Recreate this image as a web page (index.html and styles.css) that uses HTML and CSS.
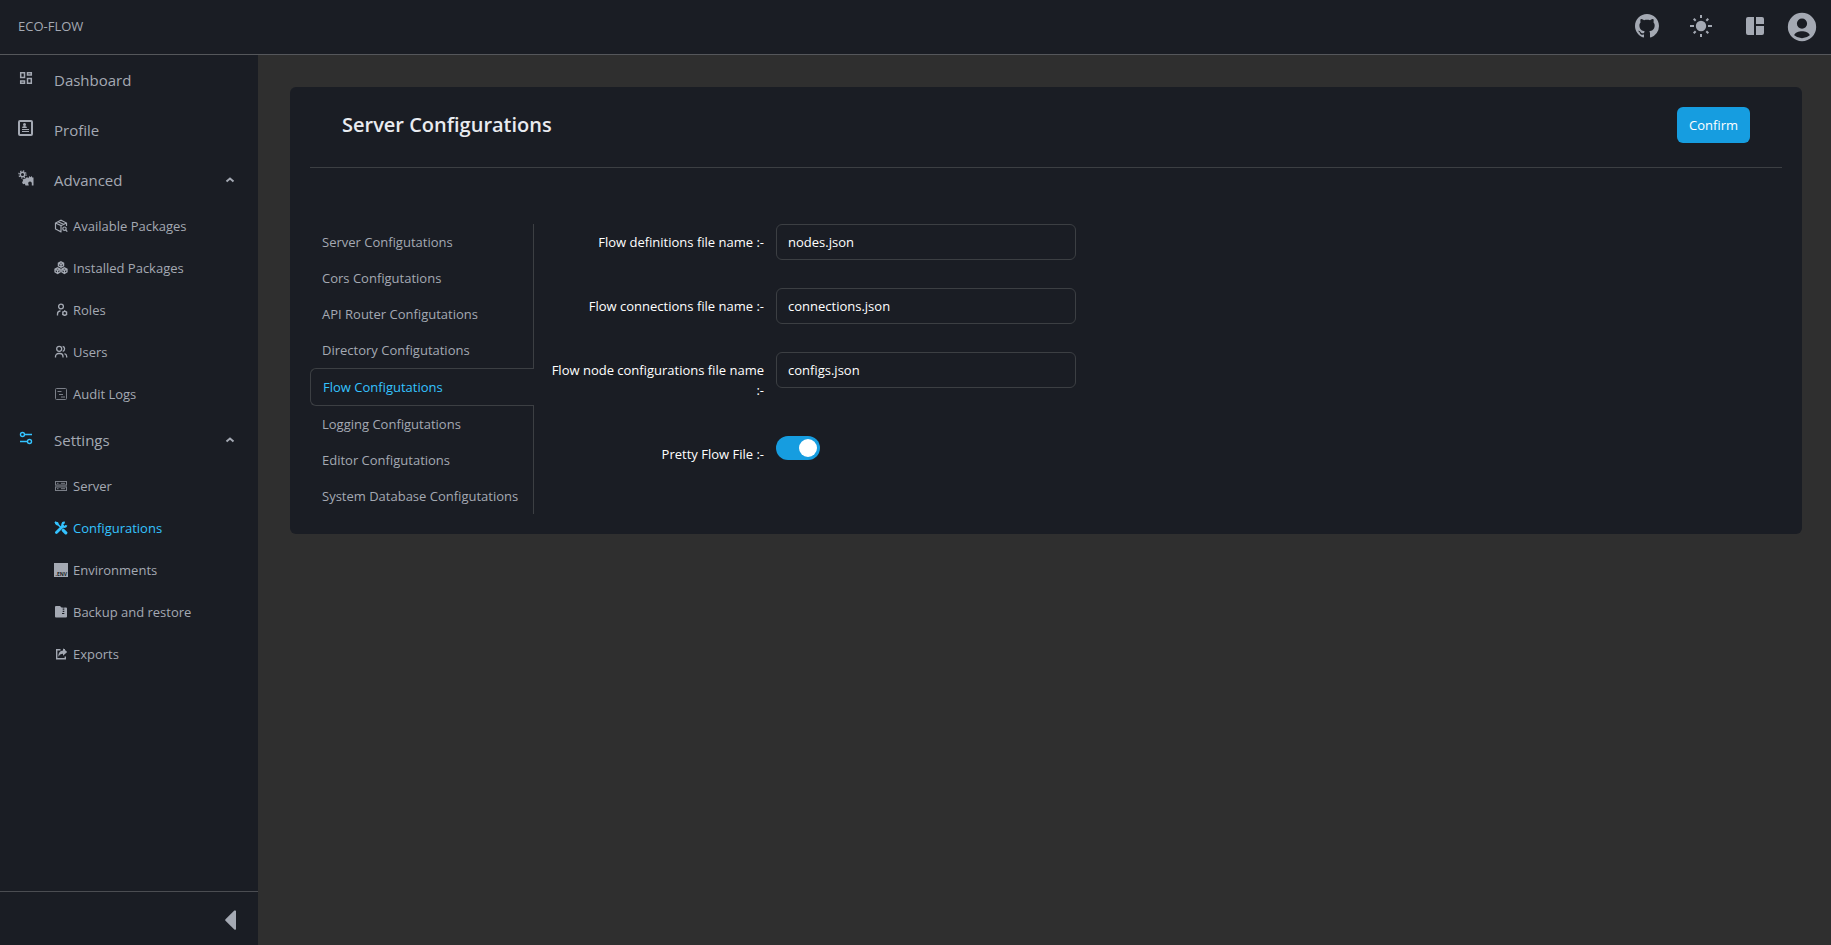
FILE: index.html
```html
<!DOCTYPE html>
<html lang="en">
<head>
<meta charset="utf-8">
<title>ECO-FLOW</title>
<link rel="stylesheet" href="styles.css">
</head>
<body>
<header class="topbar">
  <a class="brand" href="#">ECO-FLOW</a>
  <div class="tools">
    <a class="tool" href="#" aria-label="GitHub"><svg width="24" height="24" viewBox="0 0 16 16" fill="currentColor"><path d="M8 0C3.58 0 0 3.58 0 8c0 3.54 2.29 6.53 5.47 7.59.4.07.55-.17.55-.38 0-.19-.01-.82-.01-1.49-2.01.37-2.53-.49-2.69-.94-.09-.23-.48-.94-.82-1.13-.28-.15-.68-.52-.01-.53.63-.01 1.08.58 1.23.82.72 1.21 1.87.87 2.33.66.07-.52.28-.87.51-1.07-1.78-.2-3.64-.89-3.64-3.95 0-.87.31-1.59.82-2.15-.08-.2-.36-1.02.08-2.12 0 0 .67-.21 2.2.82.64-.18 1.32-.27 2-.27s1.36.09 2 .27c1.53-1.04 2.2-.82 2.2-.82.44 1.1.16 1.92.08 2.12.51.56.82 1.27.82 2.15 0 3.07-1.87 3.75-3.65 3.95.29.25.54.73.54 1.48 0 1.07-.01 1.93-.01 2.2 0 .21.15.46.55.38A8.01 8.01 0 0 0 16 8c0-4.42-3.58-8-8-8z"/></svg></a>
    <button class="tool" aria-label="Light theme"><svg width="24" height="24" viewBox="0 0 24 24" fill="currentColor" stroke="currentColor" stroke-width="2"><circle cx="12" cy="12" r="5.200" stroke="none"/><path d="M12 1v3M12 20v3M1 12h4M19 12h4M4.700 4.700l2 2M17.300 17.300l2 2M4.700 19.300l2-2M17.300 6.700l2-2"/></svg></button>
    <button class="tool" aria-label="Layout"><svg width="24" height="24" viewBox="0 0 24 24" fill="currentColor"><path d="M11 21H5a2 2 0 0 1-2-2V5a2 2 0 0 1 2-2h6zM13 21h6a2 2 0 0 0 2-2v-7h-8zM21 10V5a2 2 0 0 0-2-2h-6v7z"/></svg></button>
    <button class="tool account" aria-label="Account"><svg width="34" height="34" viewBox="0 0 24 24" fill="currentColor"><path d="M12 2a10 10 0 1 0 0 20 10 10 0 0 0 0-20zm0 4a3.600 3.600 0 1 1 0 7.200A3.600 3.600 0 0 1 12 6zm0 14a9 9 0 0 1-5.500-2.200c.5-1.800 3.200-2.800 5.500-2.800s5 1 5.500 2.800A9 9 0 0 1 12 20z"/></svg></button>
  </div>
</header>
<div class="body">
  <aside class="sidebar">
    <nav class="nav">
      <a class="item" href="#"><svg class="icon" viewBox="0 0 16 16" fill="none" stroke="currentColor" stroke-width="1.500"><path d="M2.700 2.700h3.800v4.800H2.700zM9.500 2.700h3.800v2.300H9.500zM2.700 11h3.800v2.300H2.700zM9.500 8.500h3.800v4.800H9.500z"/></svg>Dashboard</a>
      <a class="item" href="#"><svg class="icon" viewBox="0 0 16 16" fill="none" stroke="currentColor"><rect x="1" y="1" width="13" height="14" rx="1" stroke-width="2"/><path d="M4 9.500h7M4 11.500h7" stroke-width="1"/><circle cx="6.500" cy="4.500" r="1.500" fill="currentColor" stroke="none"/><path d="M4 8q0-2 2.500-2t2.500 2z" fill="currentColor" stroke="none"/></svg>Profile</a>
      <button class="item"><svg class="icon" viewBox="0 0 16 16" fill="currentColor"><circle cx="4.500" cy="4.500" r="2.200" fill="none" stroke="currentColor" stroke-width="1.400"/><circle cx="4.500" cy="4.500" r="3.600" fill="none" stroke="currentColor" stroke-width="1.200" stroke-dasharray="1.400 1.427"/><path d="M7.500 8.500L9 7l1.300 1.200L11.500 6l1 1.300 1.200-1.300.6 1.500H15.500V15.500H13.800v-2.300a1.800 1.800 0 0 0-3.600 0l.6 2.300H7.500l-.7-1.700-1.800.4L4 12l1.200-.9L4.500 9.500 6 9z"/></svg><span class="grow">Advanced</span><svg class="caret" width="10" height="8" viewBox="0 0 10 8" fill="none" stroke="currentColor" stroke-width="2"><path d="M1.500 5.500L5 2.500l3.500 3"/></svg></button>
      <a class="sub" href="#"><svg class="mini" viewBox="0 0 14 14" fill="none" stroke="currentColor" stroke-width="1.200"><path d="M7.500 12.800H7L1.500 10V4L7 1.200 12.500 4v3M1.500 4L7 6.500 12.500 4M7 6.500v6.300M4 2.700l5.500 2.600"/><circle cx="10.500" cy="9.700" r="1.700"/><path d="M11.700 11l1.600 1.600"/></svg>Available Packages</a>
      <a class="sub" href="#"><svg class="mini" viewBox="0 0 14 14" fill="none" stroke="currentColor"><path d="M7 .8l2.600 1.300v2.800L7 6.300 4.400 4.900V2.100zM4.400 2.100L7 3.400l2.600-1.300M7 3.400v2.900M3.600 6.800l2.600 1.300v2.800L3.600 12.500 1 10.900V8.100zM1 8.100l2.600 1.300 2.600-1.300M3.600 9.400v3M10.400 6.800L13 8.100v2.800l-2.600 1.600-2.600-1.600V8.100zM7.800 8.100l2.600 1.300L13 8.100M10.400 9.400v3" stroke-width="1.300"/></svg>Installed Packages</a>
      <a class="sub" href="#"><svg class="mini" viewBox="0 0 14 14" fill="none" stroke="currentColor" stroke-width="1.300"><circle cx="7" cy="3.500" r="2.400"/><path d="M3.500 12.500v-1.500A3 3 0 0 1 6.500 8"/><circle cx="10.700" cy="10.200" r="1.900"/><path d="M10.700 7.300v1M10.700 12v1M8.200 8.800l.9.500M12.300 11.100l.9.500M8.200 11.600l.9-.5M12.300 9.300l.9-.5"/></svg>Roles</a>
      <a class="sub" href="#"><svg class="mini" viewBox="0 0 14 14" fill="none" stroke="currentColor" stroke-width="1.300"><circle cx="5.200" cy="3.800" r="2.500"/><path d="M1.500 12.500V11.500A3 3 0 0 1 4.500 8.500h1.500a3 3 0 0 1 3 3v1M8.700 1.300a2.600 2.600 0 0 1 0 5M10.500 8.700a3 3 0 0 1 2.200 2.800v1"/></svg>Users</a>
      <a class="sub" href="#"><svg class="mini dim" viewBox="0 0 14 14" fill="none" stroke="currentColor"><rect x="1.500" y="1.500" width="11" height="11" rx="1"/><path d="M3.500 4.500h4M5 7.500h4M7 10h4"/></svg>Audit Logs</a>
      <button class="item"><svg class="icon accent" viewBox="0 0 16 16" fill="none" stroke="currentColor" stroke-width="1.400"><circle cx="4.500" cy="4.500" r="2"/><path d="M6.500 4.500H14M2 11.500h7.500"/><circle cx="11.500" cy="11.500" r="2"/></svg><span class="grow">Settings</span><svg class="caret" width="10" height="8" viewBox="0 0 10 8" fill="none" stroke="currentColor" stroke-width="2"><path d="M1.500 5.500L5 2.500l3.500 3"/></svg></button>
      <a class="sub" href="#"><svg class="mini dim" viewBox="0 0 14 14" fill="none" stroke="currentColor"><rect x="1.500" y="2.500" width="11" height="3.500"/><rect x="1.500" y="8" width="11" height="3.500"/><path d="M1 7h12" stroke-width=".6"/><path d="M3 4.300h1.500M7 4.300h4M3 9.700h1.500M7 9.700h4"/></svg>Server</a>
      <a class="sub accent" href="#"><svg class="mini" viewBox="0 0 14 14" fill="none" stroke="currentColor"><path d="M1 1.200l2.500.8.5 1.500L8 7.500" stroke-width="1.600"/><path d="M1 1l2.700 1L4 4l-2-.5z" fill="currentColor"/><path d="M9.300 9.300l2.500 2.500" stroke-width="3.200" stroke-linecap="round"/><path d="M2.400 11.600L8.800 5.200" stroke-width="2.800" stroke-linecap="round"/><path d="M10.800 1.800a2 2 0 1 0 1.500 2.400" stroke-width="2.200"/></svg>Configurations</a>
      <a class="sub" href="#"><svg class="mini" viewBox="0 0 14 14"><path d="M0 0h14v14H0z" fill="currentColor"/><text class="env" x="13" y="13" text-anchor="end">.ENV</text></svg>Environments</a>
      <a class="sub" href="#"><svg class="mini" viewBox="0 0 14 14" fill="currentColor"><path d="M1 2A1 1 0 0 1 2 1h4l1.500 1.500H12a1 1 0 0 1 1 1V11.500a1 1 0 0 1-1 1H2a1 1 0 0 1-1-1z"/><path d="M9.500 2.500v7" stroke="#1a1d24" stroke-width="1.600" stroke-dasharray="1 .8"/><path d="M8 8.500h2" stroke="#1a1d24"/></svg>Backup and restore</a>
      <a class="sub" href="#"><svg class="mini" viewBox="0 0 14 14" fill="none" stroke="currentColor" stroke-width="1.400"><path d="M6.500 2.700H2.700v9.100h8.600V9.500M9 2.700h2"/><path d="M9 1.300L13.200 5 9 8.700v-2Q6 6.500 4.300 9.700 4.300 3.800 9 3.500z" fill="currentColor" stroke="none"/></svg>Exports</a>
    </nav>
    <div class="foot"><button class="collapse" aria-label="Collapse sidebar"><svg width="11" height="20" viewBox="0 0 11 20" fill="currentColor"><path d="M9.300.6Q11 0 11 1v18q0 1-1.700.4L.5 10.800q-.7-.8 0-1.600z"/></svg></button></div>
  </aside>
  <main class="main">
    <section class="card">
      <div class="head"><h1 class="title">Server Configurations</h1><button class="confirm">Confirm</button></div>
      <div class="content">
        <nav class="tabs">
          <a class="tab" href="#">Server Configutations</a>
          <a class="tab" href="#">Cors Configutations</a>
          <a class="tab" href="#">API Router Configutations</a>
          <a class="tab" href="#">Directory Configutations</a>
          <a class="tab active" href="#">Flow Configutations</a>
          <a class="tab" href="#">Logging Configutations</a>
          <a class="tab" href="#">Editor Configutations</a>
          <a class="tab" href="#">System Database Configutations</a>
        </nav>
        <form class="form">
          <div class="row"><label class="label" for="defs">Flow definitions file name :-</label><input class="field" id="defs" type="text" value="nodes.json"></div>
          <div class="row"><label class="label" for="conns">Flow connections file name :-</label><input class="field" id="conns" type="text" value="connections.json"></div>
          <div class="row"><label class="label" for="confs">Flow node configurations file name :-</label><input class="field" id="confs" type="text" value="configs.json"></div>
          <div class="row"><label class="label" for="pretty">Pretty Flow File :-</label><input class="toggle" id="pretty" type="checkbox" role="switch" checked></div>
        </form>
      </div>
    </section>
  </main>
</div>
</body>
</html>
```
FILE: styles.css
```css
* { box-sizing: border-box; }
body {
  margin: 0;
  min-height: 100vh;
  display: flex;
  flex-direction: column;
  background: #2f2f2f;
  color: #a4a9b3;
  font: 13px/20px "Open Sans", "Noto Sans", sans-serif;
}
a { color: inherit; text-decoration: none; }
button { font: inherit; color: inherit; background: none; border: 0; padding: 0; cursor: pointer; }
svg { display: block; flex: none; }

.topbar {
  display: flex;
  justify-content: space-between;
  align-items: center;
  height: 55px;
  padding: 0 12px 0 18px;
  background: #1a1d24;
  border-bottom: 1px solid #55575b;
}
.brand { padding-bottom: 2px; }
.tools { display: flex; align-items: center; gap: 30px; }
.tool { display: block; padding-bottom: 2px; }
.account { margin-left: -12px; padding: 0; }

.body { flex: 1; display: flex; }
.sidebar {
  width: 258px;
  flex: none;
  display: flex;
  flex-direction: column;
  background: #1a1d24;
}
.nav { flex: 1; }
.item {
  display: flex;
  align-items: center;
  gap: 20px;
  width: 100%;
  height: 50px;
  padding: 0 23px 0 18px;
  font-size: 15px;
  text-align: left;
}
.icon { width: 16px; height: 16px; margin-bottom: 4px; }
.grow { flex: 1; }
.sub {
  display: flex;
  align-items: center;
  gap: 5px;
  height: 42px;
  padding-left: 54px;
}
.mini { width: 14px; height: 14px; }
.dim { opacity: .7; }
.env { font-size: 5px; font-weight: 700; fill: #1a1d24; }
.accent { color: #34c3ff; }
.foot {
  display: flex;
  justify-content: flex-end;
  align-items: center;
  height: 54px;
  padding: 2px 22px 0 0;
  border-top: 1px solid #4b4d52;
}

.main { flex: 1; min-width: 0; padding: 32px 29px 32px 32px; }
.card { padding: 20px; background: #1a1d24; border-radius: 6px; }
.head {
  display: flex;
  justify-content: space-between;
  align-items: flex-start;
  height: 61px;
  padding: 0 32px;
  border-bottom: 1px solid #3c3f43;
}
.title { margin: 0; font-size: 20px; line-height: 36px; font-weight: 600; color: #e9ebf0; }
.confirm {
  height: 36px;
  padding: 0 12px;
  border-radius: 6px;
  background: #169de0;
  color: #fff;
}
.content { display: flex; gap: 12px; padding-top: 56px; }
.tabs { width: 224px; flex: none; display: flex; flex-direction: column; }
.tab { padding: 8px 11px 8px 12px; border-right: 1px solid #3c3f43; }
.tab.active {
  border: 1px solid #3c3f43;
  border-right: 0;
  border-radius: 6px 0 0 6px;
  color: #34c3ff;
}
.form { display: flex; flex-direction: column; gap: 28px; }
.row { display: flex; align-items: flex-start; gap: 12px; }
.label { width: 218px; padding: 8px 0; text-align: right; color: #fff; }
.field {
  width: 300px;
  height: 36px;
  padding: 7px 11px;
  border: 1px solid #3c3f43;
  border-radius: 6px;
  background: #1a1d24;
  color: #fff;
  font: inherit;
}
.toggle {
  appearance: none;
  display: flex;
  width: 44px;
  height: 24px;
  margin: 0;
  padding: 3px;
  border-radius: 12px;
  background: #169de0;
}
.toggle::before { content: ""; width: 18px; height: 18px; border-radius: 50%; background: #fff; }
.toggle:checked { justify-content: flex-end; }
```
